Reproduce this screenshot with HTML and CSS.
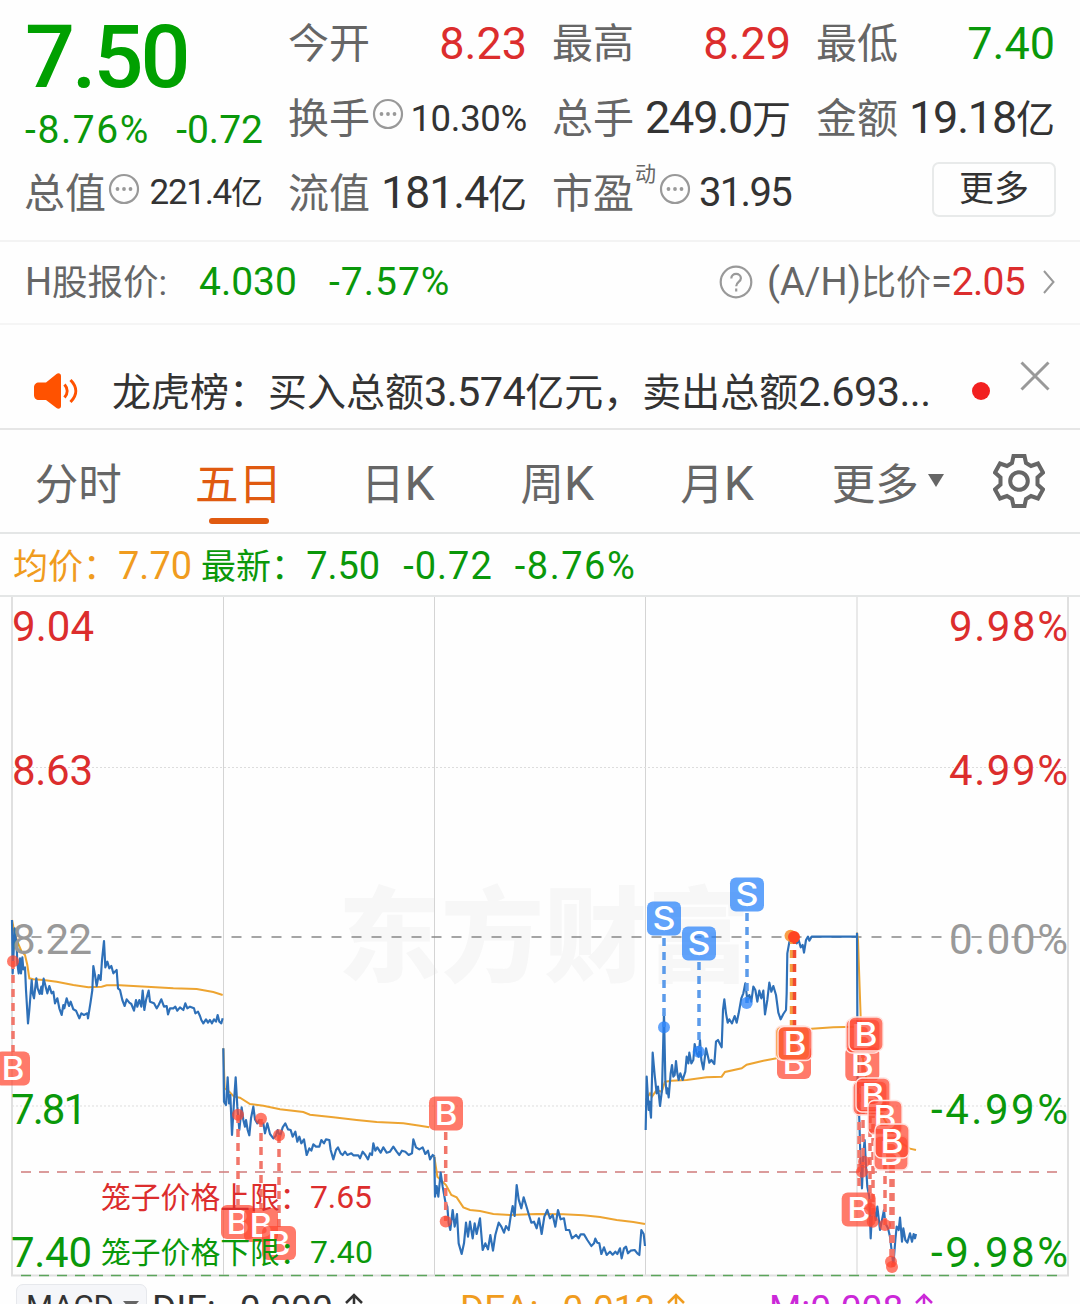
FILE: index.html
```
<!DOCTYPE html>
<html lang="zh-CN">
  <head>
    <meta charset="utf-8">
    <title>五日行情</title>
    <link rel="stylesheet" href="styles.css">
  </head>
  <body>
    <header class="quote">
      <div class="price">
        <div class="last">7.50</div>
        <div class="change"><span class="pct">-8.76%</span><span>-0.72</span></div>
      </div>
      <div class="cell"><label>今开</label><span class="up">8.23</span></div>
      <div class="cell"><label>最高</label><span class="up">8.29</span></div>
      <div class="cell"><label>最低</label><span class="down">7.40</span></div>
      <div class="cell"><label>换手</label><svg class="dots"><use href="#icon-dots"/></svg><span class="mid">10.30%</span></div>
      <div class="cell"><label>总手</label><span class="tight">249.0<small>万</small></span></div>
      <div class="cell"><label>金额</label><span class="tight">19.18<small>亿</small></span></div>
      <div class="cell"><label>总值</label><svg class="dots"><use href="#icon-dots"/></svg><span class="mid narrow">221.4<small>亿</small></span></div>
      <div class="cell"><label>流值</label><span class="tight">181.4<small>亿</small></span></div>
      <div class="cell"><label>市盈<sup>动</sup></label><svg class="dots"><use href="#icon-dots"/></svg><span class="pe">31.95</span></div>
      <div class="cell"><button class="more">更多</button></div>
    </header>

    <section class="hshare">
      <span class="name"><b>H</b>股报价:</span>
      <span class="down hprice">4.030</span>
      <span class="down">-7.57%</span>
      <svg class="help" viewBox="0 0 34 34">
        <circle cx="17" cy="17" r="15.3"/>
        <path d="M12.3 13.5c0-6 9.6-6 9.6-.3 0 3.800-4.700 3.600-4.700 8"/>
        <path d="M17.200 23.500v3"/>
      </svg>
      <span class="ratio">(A/H)<small>比价</small>=</span><span class="up hratio">2.05</span>
      <svg class="chevron" viewBox="0 0 12 26"><path d="M1 2l9.500 11L1 24"/></svg>
    </section>

    <section class="notice">
      <svg class="horn" viewBox="0 0 44 36">
        <path class="body" d="M5 9.500h7L22.500 1c2-1.500 4.500-.5 4.500 2v30c0 2.500-2.500 3.500-4.500 2L12 27H5c-3 0-5-2-5-5v-7.500c0-3 2-5 5-5z"/>
        <path d="M30.500 11.500c3.500 4 3.500 9 0 13M36.500 7c7 7 7 15 0 22"/>
      </svg>
      <p>龙虎榜：买入总额<span>3.574</span>亿元，卖出总额<span>2.693...</span></p>
      <i class="unread"></i>
      <svg class="close" viewBox="0 0 30 30"><path d="M1.500 1.500l27 27M28.500 1.500l-27 27"/></svg>
    </section>

    <nav class="tabs">
      <a>分时</a>
      <a class="active">五日</a>
      <a>日<span>K</span></a>
      <a>周<span>K</span></a>
      <a>月<span>K</span></a>
      <a>更多<i class="caret"></i></a>
      <svg class="gear" viewBox="0 0 52 54">
        <path d="M20.500 2h11l1.500 7 5 3 7-2.500 5 9-5.500 5v7l5.500 5-5 9-7-2.500-5 3-1.500 7h-11l-1.500-7-5-3-7 2.500-5-9 5.500-5v-7l-5.500-5 5-9 7 2.500 5-3z"/>
        <circle cx="26" cy="27" r="8.800"/>
      </svg>
    </nav>

    <div class="legend">
      <span class="avg">均价：<b>7.70</b></span>
      <span class="down">最新：<b>7.50</b></span>
      <b class="down diff">-0.72</b>
      <b class="down pct">-8.76%</b>
    </div>

    <svg class="chart" viewBox="0 597 1080 682">
      <defs>
        <symbol id="icon-dots" viewBox="0 0 32 32">
          <circle cx="16" cy="16" r="14" fill="none" stroke="#999" stroke-width="2.200"/>
          <circle cx="9.500" cy="16" r="1.900" fill="#999"/>
          <circle cx="16" cy="16" r="1.900" fill="#999"/>
          <circle cx="22.500" cy="16" r="1.900" fill="#999"/>
        </symbol>
        <g id="buy">
          <rect x="-17" y="-17" width="34" height="34" rx="6"/>
          <text y="11.500" textLength="23" lengthAdjust="spacingAndGlyphs">B</text>
        </g>
        <g id="sell">
          <rect x="-17" y="-17" width="34" height="34" rx="6"/>
          <text y="11.500" textLength="23" lengthAdjust="spacingAndGlyphs">S</text>
        </g>
      </defs>

      <text class="watermark" x="338" y="974" textLength="412">东方财富</text>

      <!-- grid -->
      <path class="grid" d="M223.500 597V1275M434.500 597V1275M645.500 597V1275M857 597V1275"/>
      <path class="frame" d="M12 597V1275.500H1068V597"/>
      <path class="dotted" d="M12 767.500H1068M12 1106H1068"/>
      <path class="zero" d="M31.500 937H1062"/>
      <path class="limit-up" d="M21 1172H1057"/>
      <path class="limit-down" d="M21 1275.500H1057"/>

      <!-- one group per trading day -->
      <g transform="translate(0 880) scale(.33333)">
        <polyline class="mean" points="36,120 44,160 52,185 65,215 75,225 82,255 88,295 100,298 130,300 170,305 220,315 265,322 305,320 320,316 360,316 440,320 520,325 590,327 640,336 668,345"/>
        <polyline class="line" points="36,120 38,280 44,145 50,200 52,250 56,280 60,235 63,280 67,232 70,268 75,262 78,330 84,430 88,390 95,300 98,340 102,355 109,295 113,325 119,342 124,320 126,342 131,296 137,320 142,340 148,318 155,340 160,335 165,370 172,355 178,385 185,405 190,375 193,385 200,355 207,378 212,365 220,388 228,392 238,415 244,400 252,405 262,400 264,415 272,365 277,330 280,258 285,285 290,318 296,285 302,300 306,240 312,183 316,262 322,245 328,265 334,258 340,280 350,270 354,325 360,330 367,360 374,378 380,358 388,368 394,372 402,392 408,360 412,380 418,360 424,380 428,332 433,390 438,360 446,332 450,365 462,370 470,385 476,375 484,358 492,380 500,378 504,403 510,385 520,385 526,380 532,392 540,382 550,390 556,370 562,385 570,380 582,385 586,400 594,395 600,408 604,420 610,430 618,418 624,428 630,420 636,430 642,418 648,425 653,405 658,425 664,430 668,415"/>
      </g>
      <g transform="translate(210 1030) scale(.33333)">
        <polyline class="mean" points="40,55 44,175 58,185 72,200 90,203 120,222 160,227 210,238 280,246 300,254 370,262 440,270 500,276 580,280 630,287 658,292"/>
        <polyline class="line" points="40,55 42,215 48,225 53,142 57,220 61,195 66,315 72,215 77,142 82,230 88,300 95,232 100,270 105,290 108,270 113,300 118,316 123,265 130,230 135,268 142,280 148,270 154,285 160,280 165,310 172,280 180,312 190,325 197,318 203,300 210,320 218,292 226,280 234,298 242,300 248,320 256,305 262,335 268,320 274,340 282,328 290,375 298,355 304,362 310,343 318,350 328,350 334,330 342,340 348,328 358,330 362,360 370,388 378,360 384,352 392,370 398,375 405,365 412,375 424,370 430,376 445,376 450,385 458,365 466,375 474,388 480,370 486,375 490,340 496,362 502,352 512,368 520,352 530,368 540,365 550,350 560,365 568,375 576,362 586,365 596,375 606,370 610,328 618,352 628,358 638,352 646,372 654,362 660,388 668,375 674,380"/>
      </g>
      <g transform="translate(430 1080) scale(.33333)">
        <polyline class="mean" points="13,230 22,290 48,315 64,345 80,352 100,382 120,390 150,393 190,402 240,405 320,402 400,403 460,406 510,411 560,420 610,426 645,432"/>
        <polyline class="line" points="13,230 15,350 20,318 25,350 32,278 38,320 46,365 52,380 56,430 61,450 68,390 74,440 81,402 86,490 95,522 102,490 108,428 114,470 120,425 128,475 134,430 140,462 150,415 158,510 166,490 174,508 181,465 189,512 196,465 206,428 214,440 222,458 228,438 236,450 242,410 248,378 254,408 260,315 266,358 274,385 281,352 288,375 296,402 304,428 312,425 320,445 327,415 335,462 343,410 352,390 360,415 368,405 376,440 384,390 392,418 402,415 408,450 418,450 426,475 438,465 446,475 452,463 462,463 472,480 484,498 492,490 496,476 502,488 508,490 514,522 522,502 530,525 540,515 548,524 556,515 562,522 570,505 575,535 582,505 588,500 594,520 602,512 614,510 622,520 628,525 634,450 641,462 645,498"/>
      </g>
      <g transform="translate(630 860) scale(.33333)">
        <polyline class="mean" points="47,720 60,700 66,710 80,690 95,695 105,665 125,662 170,660 230,652 275,650 285,636 335,625 350,614 400,602 440,595 470,585 500,515 545,506 610,502 680,500"/>
        <polyline class="line" points="47,810 50,650 56,750 58,725 63,773 68,578 74,645 80,700 84,680 90,738 96,690 102,455 106,660 110,700 112,685 116,712 122,640 126,615 130,650 134,645 138,603 142,640 146,660 151,640 158,660 166,635 170,590 175,610 178,578 184,610 190,600 194,552 200,580 206,590 210,540 214,600 220,628 228,565 234,590 238,608 244,600 253,612 258,545 264,540 268,548 275,562 279,450 283,418 288,460 293,488 298,478 306,490 314,468 320,488 326,460 334,415 340,400 346,370 352,420 358,405 364,425 370,380 376,390 382,425 388,392 394,415 400,392 405,463 412,420 418,368 424,395 430,378 438,405 445,458 452,478 460,462 468,450 470,400 472,280 480,235 492,225 500,250 506,240 512,262 518,255 522,278 528,240 534,230 538,242 545,230 680,230"/>
      </g>
      <g transform="translate(830 920) scale(.33333)">
        <polyline class="mean" points="81,38 84,60 92,290 96,400 110,480 140,560 170,610 200,660 240,686 258,690"/>
        <polyline class="line" points="81,38 83,480 88,600 92,740 96,805 100,700 104,660 108,740 112,800 118,830 122,955 126,880 132,870 137,900 142,860 146,895 150,930 156,900 162,870 166,910 174,925 180,950 190,1035 196,960 200,920 206,930 210,893 216,965 220,925 226,960 232,968 240,940 246,965 251,942 255,955 258,942"/>
      </g>

      <!-- buy / sell marks -->
      <g class="sell">
        <path d="M664 938V1027M699 962V1051M747 913V1003"/>
        <circle cx="664" cy="1027.300" r="6"/>
        <circle cx="698.700" cy="1051.700" r="6"/>
        <circle cx="746.700" cy="1003" r="6"/>
        <use href="#sell" x="664" y="918.500"/>
        <use href="#sell" x="699" y="943.500"/>
        <use href="#sell" x="747" y="894.500"/>
      </g>
      <g class="buy">
        <path d="M13 961V1052M238 1115V1205M261 1119V1209M279 1135V1227M445.700 1132V1221"/>
        <path d="M859 1080V1190M863 1050V1165M870 1115V1209M873 1110V1222M885 1134V1225M891 1165V1262M893 1165V1267"/>
        <circle cx="13" cy="961.300" r="6"/>
        <circle cx="238" cy="1114.700" r="6"/>
        <circle cx="261" cy="1118.700" r="6"/>
        <circle cx="279" cy="1135.300" r="6"/>
        <circle cx="445.700" cy="1221.500" r="6"/>
        <use href="#buy" x="13" y="1068.500"/>
        <use href="#buy" x="238" y="1222"/>
        <use href="#buy" x="261" y="1225"/>
        <use href="#buy" x="279" y="1243"/>
        <use href="#buy" x="446" y="1113.500"/>
        <use href="#buy" x="794" y="1062"/>
        <use href="#buy" x="858.700" y="1209.500"/>
        <use href="#buy" x="862.300" y="1064"/>
        <circle cx="864" cy="1161.700" r="6"/>
        <circle cx="862" cy="1171.700" r="6"/>
        <circle cx="870" cy="1209" r="6"/>
        <circle cx="872.700" cy="1221.700" r="6"/>
        <circle cx="885" cy="1225" r="6"/>
        <circle cx="891" cy="1261.700" r="6"/>
        <circle cx="892" cy="1267" r="6"/>
      </g>
      <path class="stem orange" d="M791.500 936V1026"/>
      <path class="stem red" d="M794.500 936V1026"/>
      <circle class="orange" cx="790.500" cy="935.700" r="6"/>
      <circle class="red" cx="794" cy="937" r="6"/>
      <g class="buy stacked">
        <use class="orange" href="#buy" x="792.500" y="1043"/>
        <use href="#buy" x="795" y="1043.500"/>
        <use href="#buy" x="863" y="1036"/>
        <use href="#buy" x="866" y="1034"/>
        <use href="#buy" x="870" y="1098"/>
        <use href="#buy" x="873" y="1095"/>
        <use href="#buy" x="885" y="1117.500"/>
        <use href="#buy" x="891" y="1153"/>
        <use href="#buy" x="892" y="1141"/>
      </g>

      <!-- scale -->
      <g class="scale">
        <text class="up" x="12" y="641" textLength="82">9.04</text>
        <text class="up" x="12" y="785" textLength="81">8.63</text>
        <text class="flat" x="12" y="954" textLength="80">8.22</text>
        <text class="down" x="11" y="1124" textLength="76">7.81</text>
        <text class="down" x="11" y="1267" textLength="81">7.40</text>
        <text class="up" x="949" y="641" textLength="119">9.98%</text>
        <text class="up" x="949" y="785" textLength="119">4.99%</text>
        <text class="flat" x="949" y="954" textLength="119">0.00%</text>
        <text class="down" x="931" y="1124" textLength="137">-4.99%</text>
        <text class="down" x="931" y="1267" textLength="137">-9.98%</text>
      </g>
      <g class="cage">
        <text class="up" x="101" y="1208">笼子价格上限：</text>
        <text class="up num" x="310" y="1208" textLength="62">7.65</text>
        <text class="down" x="101" y="1263">笼子价格下限：</text>
        <text class="down num" x="310" y="1263" textLength="63">7.40</text>
      </g>
    </svg>

    <footer class="indicator">
      <span class="select">MACD<i class="caret"></i></span>
      <span class="dif">DIF:<b>0.000</b><svg viewBox="0 0 20 30"><path d="M10 2v28M2 10l8-8 8 8"/></svg></span>
      <span class="dea">DEA:<b>0.013</b><svg viewBox="0 0 20 30"><path d="M10 2v28M2 10l8-8 8 8"/></svg></span>
      <span class="macd">M:0.008<svg viewBox="0 0 20 30"><path d="M10 2v28M2 10l8-8 8 8"/></svg></span>
    </footer>
  </body>
</html>
```
FILE: styles.css
```
* { box-sizing: border-box; }

body {
  margin: 0;
  width: 1080px;
  height: 1304px;
  overflow: hidden;
  background: #fefefe;
  color: #333;
  font-family: Roboto, "Noto Sans CJK SC", sans-serif;
}

svg { fill: none; flex: none; }
b { font-weight: normal; }
.up { color: #dc2d2d; fill: #dc2d2d; }
.down { color: #0a980a; fill: #0a980a; }
.flat { fill: #999; }

/* quote header */
.quote {
  display: grid;
  grid-template-columns: repeat(4, 238px);
  grid-template-rows: repeat(3, 75px);
  column-gap: 26px;
  height: 240px;
  padding: 6px 25px 0;
}
.price { grid-row: span 2; color: #00a000; }
.last { font-size: 88px; font-weight: 500; line-height: 102px; letter-spacing: -3px; }
.change {
  display: flex;
  justify-content: space-between;
  font-size: 39px;
  line-height: 44px;
  color: #0a980a;
}
.change .pct { letter-spacing: 1.600px; }
.cell {
  display: flex;
  align-items: center;
  font-size: 45px;
  line-height: 75px;
  white-space: nowrap;
}
.cell label { position: relative; margin: 1px 0 0 -1px; font-size: 41px; color: #666; }
.cell small { font-size: 39px; letter-spacing: 0; }
.cell > span, .cell > .more { margin-left: auto; }
.cell .tight { letter-spacing: -1.200px; }
.cell .mid { margin-top: -1px; font-size: 36.500px; letter-spacing: -.3px; }
.cell .narrow { font-size: 35px; letter-spacing: -1.300px; }
.narrow small { font-size: 32px; }
.cell .pe { margin-top: -2px; font-size: 40px; letter-spacing: -1.700px; }
.cell sup {
  position: absolute;
  left: 83px;
  top: -20px;
  font-size: 21px;
}
.dots { width: 32px; height: 32px; margin: -9px 0 0 2px; }
label:has(sup) + .dots { margin-left: 25px; }
.more {
  width: 124px;
  height: 55px;
  margin: -8px -1px 0 0;
  padding: 0;
  border: 2px solid #e8eaea;
  border-radius: 7px;
  background: none;
  color: #333;
  font: 35px/49px Roboto, "Noto Sans CJK SC", sans-serif;
}

/* H share line */
.hshare {
  display: flex;
  align-items: center;
  height: 83px;
  padding: 0 25px 1px;
  border-top: 2px solid #f3f3f3;
  font-size: 39px;
}
.name { width: 174px; margin-top: -6px; font-size: 35.500px; color: #666; }
.name b { font-size: 38px; }
.hprice { width: 130px; }
.hprice + .down { letter-spacing: 1px; }
.help { width: 34px; height: 34px; margin: 0 14px 0 auto; stroke: #999; stroke-width: 2.200; }
.ratio { margin-top: -5px; color: #666; font-size: 38px; }
.ratio small { font-size: 35px; }
.hratio { letter-spacing: -.7px; }
.chevron { width: 12px; height: 26px; margin-left: 18px; stroke: #999; stroke-width: 2; }

/* notice */
.notice {
  display: flex;
  height: 107px;
  padding: 1px 29px 0 34px;
  border-top: 2px solid #f5f5f5;
  border-bottom: 2px solid #e6e6e6;
}
.horn { width: 44px; height: 36px; margin-top: 47px; stroke: #ff5200; stroke-width: 3; }
.horn .body { fill: #ff5200; stroke: none; }
.notice p { flex: 1; margin: 37px 0 0 34px; font-size: 39px; line-height: 58px; white-space: nowrap; }
.notice p span { font-size: 41.500px; letter-spacing: -.6px; }
.unread { width: 18px; height: 18px; margin: 56px 0 0 14px; border-radius: 50%; background: #f22020; }
.close { width: 30px; height: 30px; margin: 35px 1px 0 30px; stroke: #999; stroke-width: 3; }

/* tabs */
.tabs {
  display: flex;
  align-items: center;
  height: 104px;
  border-bottom: 2px solid #e4e6e6;
  font-size: 43.500px;
  color: #666;
}
.tabs a {
  display: flex;
  align-items: center;
  justify-content: center;
  width: 159.700px;
  height: 100%;
  padding: 0 3px 0 0;
}
.tabs a:last-of-type { padding-left: 22px; }
.tabs a span { margin-top: 5px; font-size: 48px; }
.tabs .active {
  position: relative;
  padding-right: 2px;
  color: #e05a10;
}
.active::after {
  content: "";
  position: absolute;
  left: 49px;
  bottom: 8px;
  width: 60px;
  height: 6px;
  border-radius: 3px;
  background: #e05a10;
}
.caret {
  border: 8px solid transparent;
  border-top: 13px solid #666;
  border-bottom: 0;
}
.tabs .caret { margin: -2px 0 0 9px; }
.gear { width: 52px; height: 54px; margin-left: 35px; stroke: #666; stroke-width: 4; }

.legend {
  display: flex;
  align-items: baseline;
  height: 63px;
  padding-left: 13px;
  border-bottom: 2px solid #e4e6e6;
  font-size: 35px;
  line-height: 64px;
  white-space: nowrap;
}
.legend b { font-size: 38px; }
.legend > b { margin-left: 23px; }
.legend .avg { margin-right: 9px; color: #f09c1e; }
.legend .diff { letter-spacing: 1px; }
.legend .pct { margin-left: 22px; letter-spacing: 1.500px; }

/* chart */
.chart { display: block; width: 1080px; height: 682px; }
.watermark { font: 900 103px "Noto Sans CJK SC", sans-serif; fill: #f7f7f7; }
.grid { stroke: #d4d4d4; }
.frame { stroke: #e0e0e0; stroke-width: 2; }
.dotted { stroke: #ddd; stroke-dasharray: 2 2; }
.zero { stroke: #888; stroke-width: 1.500; stroke-dasharray: 10 10; }
.limit-up { stroke: #cf7b7b; stroke-width: 1.500; stroke-dasharray: 10 8; }
.limit-down { stroke: #5ba55b; stroke-width: 1.500; stroke-dasharray: 10 8; }
.mean { stroke: #eda431; stroke-width: 6; }
.line { stroke: #2e70b8; stroke-width: 6.500; stroke-linejoin: round; }

.sell { fill: rgba(36, 128, 250, .72); }
.buy { fill: rgba(255, 70, 48, .72); }
.sell path, .buy path, .stem { stroke-width: 3.500; stroke-dasharray: 8 6; }
.sell path { stroke: #5b9bea; }
.buy path { stroke: #f1766a; }
#buy text, #sell text {
  fill: #fff;
  stroke: none;
  font-family: Inter, sans-serif;
  font-size: 32px;
  font-weight: 500;
  text-anchor: middle;
}
.stacked { stroke: #ffe3df; stroke-width: 1.300; }
.stem.orange { stroke: #f5a040; fill: none; }
.stem.red { stroke: #f04a30; fill: none; }
.orange { fill: #f8a048; }
.red { fill: #ff4522; }

.scale { font-size: 42px; }
.cage { font-size: 29.800px; }
.cage .num { font-size: 32px; }

/* indicator bar */
.indicator {
  display: flex;
  height: 60px;
  padding: 5px 0 0 16px;
  font-size: 37px;
  line-height: 50px;
}
.indicator > span { display: flex; }
.indicator svg { width: 20px; height: 30px; margin: 9px 0 0 11px; stroke: currentColor; stroke-width: 2.500; }
.indicator b { margin-left: 24px; }
.indicator .select {
  width: 131px;
  height: 50px;
  padding: 0 0 0 9px;
  border: 1px solid #e6e8ec;
  border-radius: 7px;
  background: #f5f6f9;
  font-size: 31px;
  line-height: 44px;
}
.select .caret { height: 9px; margin: 16px 0 0 9px; border-top-width: 9px; }
.indicator .dif { width: 307px; padding-left: 5px; }
.indicator .dea { width: 309px; padding-left: 6px; color: #f09c1e; }
.indicator .macd { padding-left: 6px; color: #cb28d8; }
```
